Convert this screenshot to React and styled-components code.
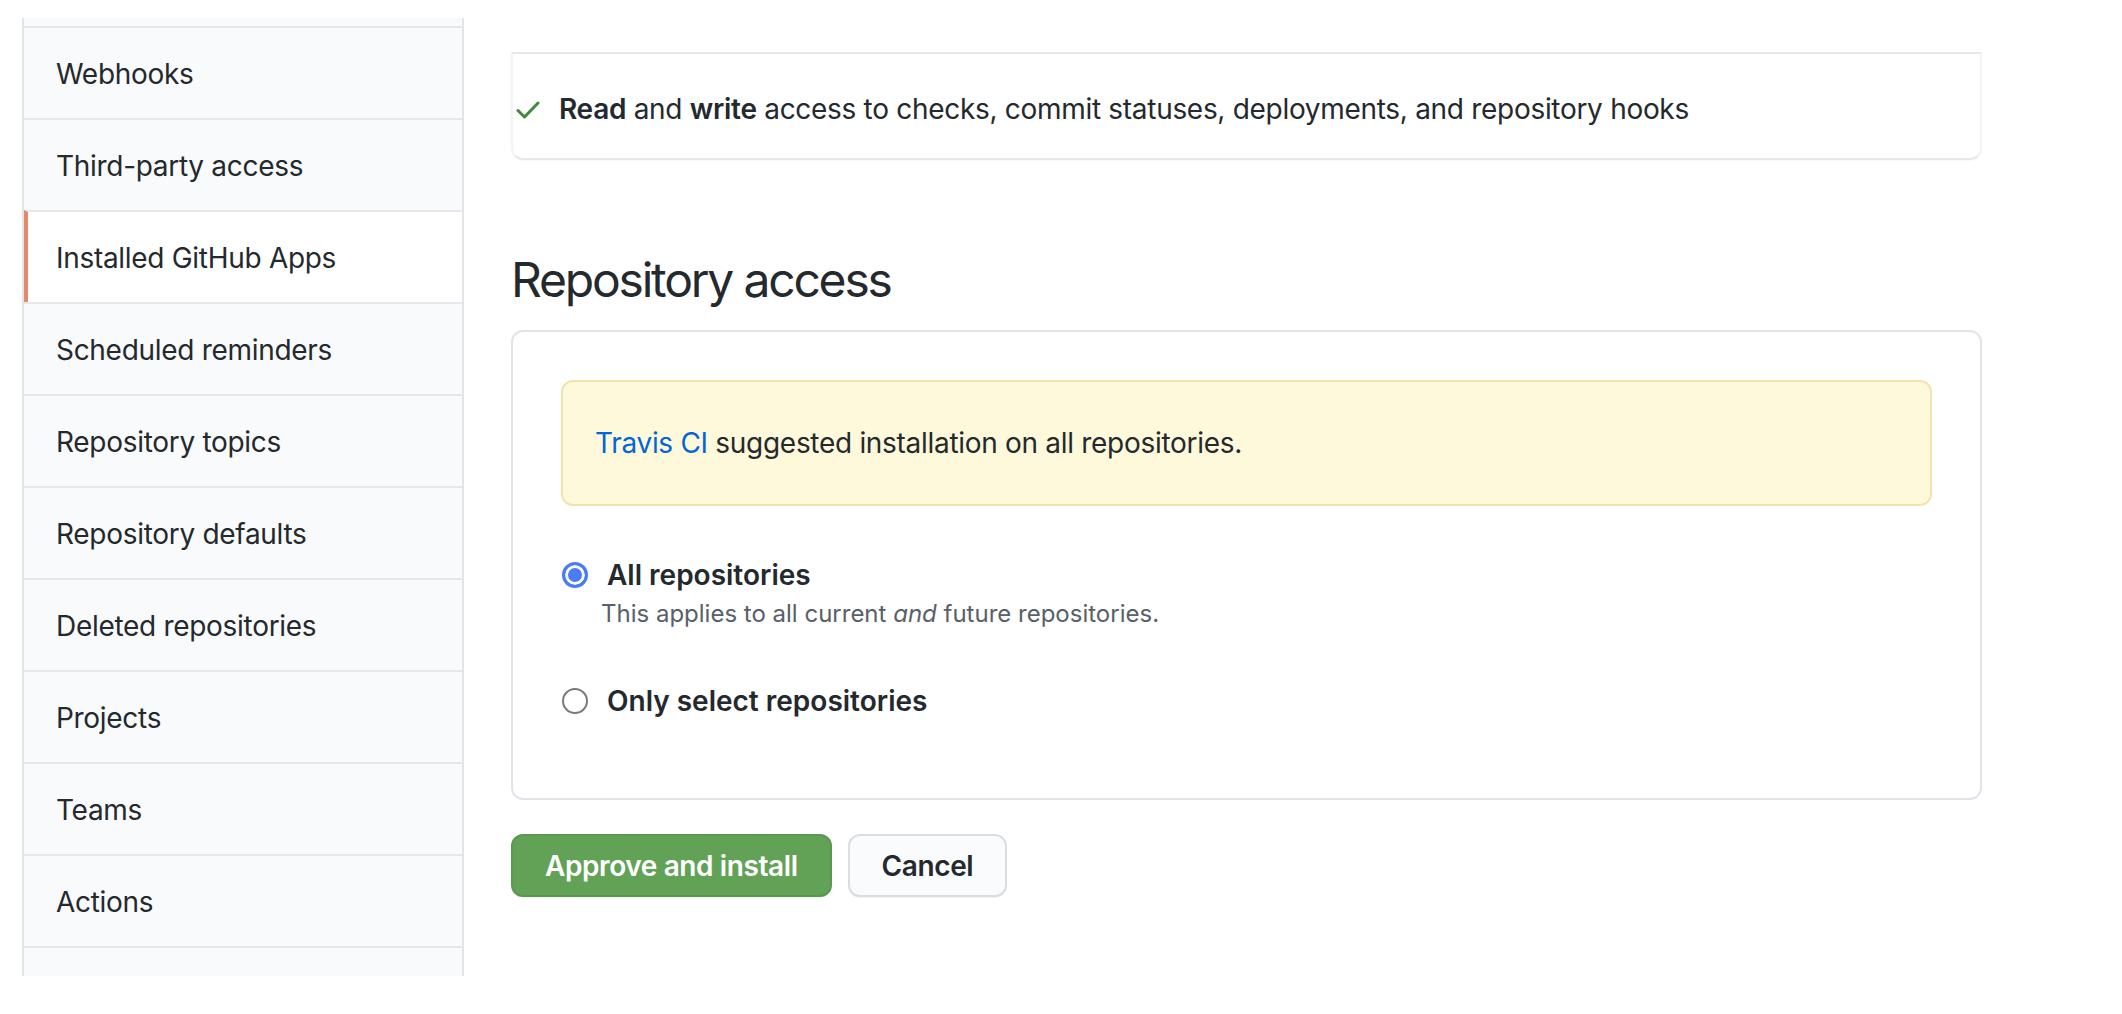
import React, { useState } from "react";
import styled, { createGlobalStyle } from "styled-components";

const GlobalStyle = createGlobalStyle`
  html, body {
    margin: 0;
    padding: 0;
    background: #ffffff;
  }
  body {
    font-family: Inter, "Noto Sans", "Liberation Sans", sans-serif;
    color: #24292e;
    -webkit-font-smoothing: antialiased;
  }
  * { box-sizing: border-box; }
`;

const Page = styled.div`
  display: flex;
  align-items: flex-start;
  gap: 47px;
  padding: 18px 0 0 22px;
  min-height: 1014px;
`;

const SideNav = styled.nav`
  width: 442px;
  flex: none;
  display: flex;
  flex-direction: column;
  background: #f9fafb;
  border-left: 2px solid #e1e4e8;
  border-right: 2px solid #e1e4e8;
  padding: 8px 0 28px;
`;

const NavItem = styled.a`
  display: flex;
  align-items: center;
  height: 92px;
  padding: 2px 0 0 ${(p) => (p.$selected ? "28px" : "32px")};
  border-top: 2px solid #e6e8eb;
  border-left: ${(p) => (p.$selected ? "4px solid #e3896c" : "none")};
  background: ${(p) => (p.$selected ? "#ffffff" : "transparent")};
  font-size: 28px;
  line-height: 40px;
  letter-spacing: -0.3px;
  color: #24292e;
  text-decoration: none;
  cursor: pointer;

  &:last-child {
    border-bottom: 2px solid #e6e8eb;
    height: 94px;
  }
`;

const Main = styled.main`
  width: 1471px;
  flex: none;
  display: flex;
  flex-direction: column;
  padding-top: 34px;
`;

const PermissionBox = styled.div`
  border-top: 2px solid #e6e8eb;
  border-left: 2px solid #f3f4f6;
  border-right: 2px solid #f3f4f6;
  border-bottom: 2px solid #e6e8eb;
  border-radius: 0 0 12px 12px;
  box-shadow: 0 1px 2px rgba(27, 31, 35, 0.04);
`;

const PermissionRow = styled.div`
  display: flex;
  align-items: center;
  gap: 19px;
  padding: 35px 32px 29px 3px;
  font-size: 28px;
  line-height: 40px;
  letter-spacing: -0.3px;
  color: #24292e;

  b {
    font-weight: 600;
  }
`;

const CheckIcon = styled.svg`
  width: 24px;
  height: 20px;
  flex: none;
  margin-top: 2px;
`;

const SectionTitle = styled.h2`
  margin: 90px 0 20px;
  font-size: 48px;
  line-height: 60px;
  font-weight: 400;
  letter-spacing: -2.2px;
  color: #24292e;
`;

const AccessBox = styled.div`
  border: 2px solid #e1e4e8;
  border-radius: 12px;
  padding: 48px;
  display: flex;
  flex-direction: column;
`;

const Flash = styled.div`
  padding: 40px 32px;
  background: #fff9dc;
  border: 2px solid #f0e4ad;
  border-radius: 12px;
  font-size: 28px;
  line-height: 42px;
  letter-spacing: -0.3px;
  color: #24292e;
`;

const Link = styled.a`
  color: #0366d6;
  text-decoration: none;
`;

const Options = styled.div`
  display: flex;
  flex-direction: column;
  gap: 48px;
  margin-top: 48px;
  padding-bottom: 28px;
`;

const Option = styled.label`
  display: grid;
  grid-template-columns: 40px 1fr;
  align-items: center;
  cursor: pointer;
`;

const Radio = styled.input.attrs({ type: "radio" })`
  appearance: none;
  -webkit-appearance: none;
  margin: 0 0 0 1px;
  width: 26px;
  height: 26px;
  border-radius: 50%;
  border: 2px solid #7a7a7a;
  background: #ffffff;
  cursor: pointer;

  &:checked {
    border: 3px solid #4a7cf6;
    background: #4a7cf6;
    box-shadow: inset 0 0 0 3px #ffffff;
  }
`;

const OptionLabel = styled.span`
  padding-left: 6px;
  font-size: 28px;
  line-height: 42px;
  font-weight: 600;
  color: #24292e;
`;

const OptionNote = styled.span`
  grid-column: 2;
  font-size: 24px;
  line-height: 36px;
  color: #586069;
`;

const Actions = styled.div`
  display: flex;
  gap: 16px;
  margin-top: 34px;
`;

const Button = styled.button`
  height: 63px;
  padding: 0 32px;
  border-radius: 12px;
  font-family: inherit;
  font-size: 28px;
  font-weight: 600;
  letter-spacing: -0.4px;
  cursor: pointer;
  border: 2px solid ${(p) => (p.$primary ? "#5a974f" : "#dadde1")};
  background: ${(p) => (p.$primary ? "#62a256" : "#fafbfc")};
  color: ${(p) => (p.$primary ? "#ffffff" : "#24292e")};
  box-shadow: 0 1px 0 rgba(27, 31, 35, 0.06);
`;

const navItems = [
  "Webhooks",
  "Third-party access",
  "Installed GitHub Apps",
  "Scheduled reminders",
  "Repository topics",
  "Repository defaults",
  "Deleted repositories",
  "Projects",
  "Teams",
  "Actions",
];

export default function App() {
  const [scope, setScope] = useState("all");

  return (
    <>
      <GlobalStyle />
      <Page>
        <SideNav>
          {navItems.map((item) => (
            <NavItem key={item} $selected={item === "Installed GitHub Apps"}>
              {item}
            </NavItem>
          ))}
        </SideNav>

        <Main>
          <PermissionBox>
            <PermissionRow>
              <CheckIcon viewBox="0 0 24 20" aria-hidden="true">
                <polyline
                  points="2,10.5 8.5,17 22,3"
                  fill="none"
                  stroke="#3f8a3c"
                  strokeWidth="3"
                  strokeLinecap="round"
                  strokeLinejoin="round"
                />
              </CheckIcon>
              <span>
                <b>Read</b> and <b>write</b> access to checks, commit statuses,
                deployments, and repository hooks
              </span>
            </PermissionRow>
          </PermissionBox>

          <SectionTitle>Repository access</SectionTitle>

          <AccessBox>
            <Flash>
              <Link href="#">Travis CI</Link> suggested installation on all
              repositories.
            </Flash>

            <Options>
              <Option>
                <Radio
                  name="scope"
                  checked={scope === "all"}
                  onChange={() => setScope("all")}
                />
                <OptionLabel>All repositories</OptionLabel>
                <OptionNote>
                  This applies to all current <i>and</i> future repositories.
                </OptionNote>
              </Option>
              <Option>
                <Radio
                  name="scope"
                  checked={scope === "select"}
                  onChange={() => setScope("select")}
                />
                <OptionLabel>Only select repositories</OptionLabel>
              </Option>
            </Options>
          </AccessBox>

          <Actions>
            <Button $primary>Approve and install</Button>
            <Button>Cancel</Button>
          </Actions>
        </Main>
      </Page>
    </>
  );
}
